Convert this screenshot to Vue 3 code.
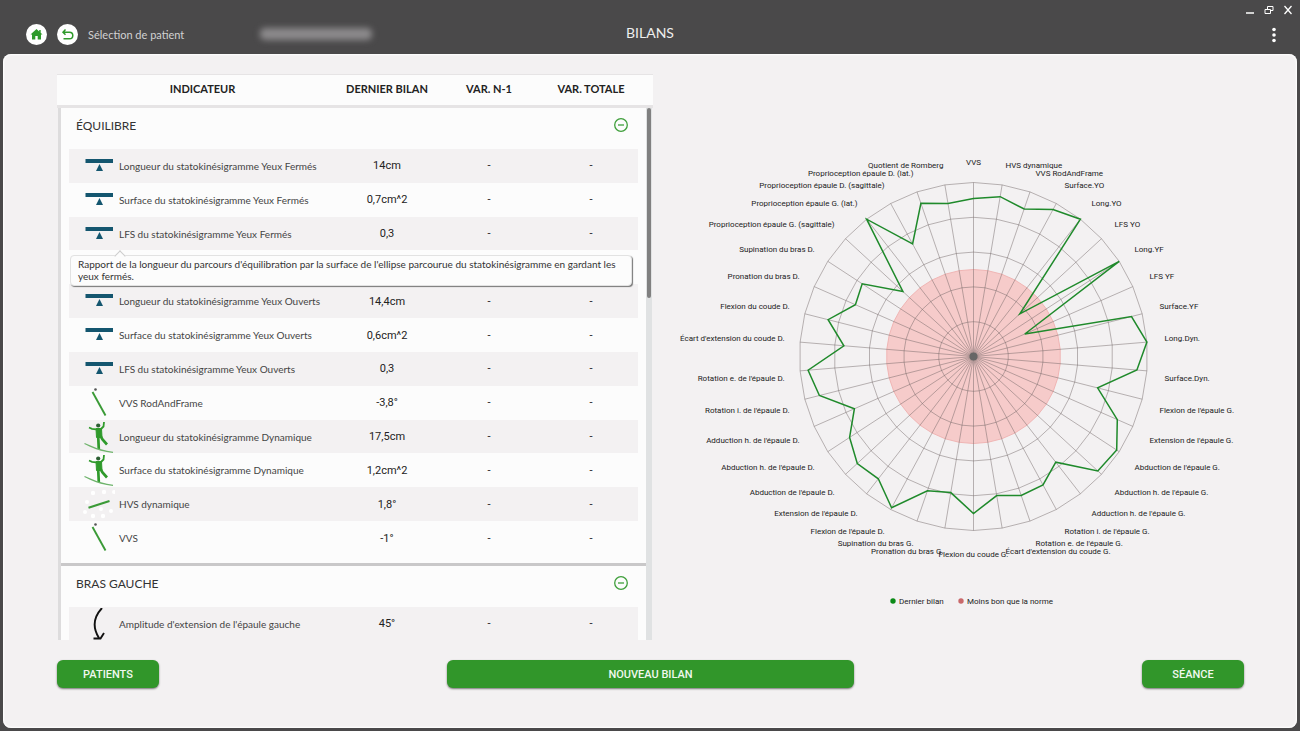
<script setup>
const sections = [
  {
    title: 'ÉQUILIBRE',
    rows: [
      { icon: 'balance', label: 'Longueur du statokinésigramme Yeux Fermés', value: '14cm' },
      { icon: 'balance', label: 'Surface du statokinésigramme Yeux Fermés', value: '0,7cm^2' },
      { icon: 'balance', label: 'LFS du statokinésigramme Yeux Fermés', value: '0,3' },
      { icon: '', label: '', value: '' },
      { icon: 'balance', label: 'Longueur du statokinésigramme Yeux Ouverts', value: '14,4cm' },
      { icon: 'balance', label: 'Surface du statokinésigramme Yeux Ouverts', value: '0,6cm^2' },
      { icon: 'balance', label: 'LFS du statokinésigramme Yeux Ouverts', value: '0,3' },
      { icon: 'rod', label: 'VVS RodAndFrame', value: '-3,8°' },
      { icon: 'surfer', label: 'Longueur du statokinésigramme Dynamique', value: '17,5cm' },
      { icon: 'surfer', label: 'Surface du statokinésigramme Dynamique', value: '1,2cm^2' },
      { icon: 'hrod', label: 'HVS dynamique', value: '1,8°' },
      { icon: 'rod', label: 'VVS', value: '-1°' },
    ],
    tip: "Rapport de la longueur du parcours d'équilibration par la surface de l'ellipse parcourue du statokinésigramme en gardant les yeux fermés.",
  },
  {
    title: 'BRAS GAUCHE',
    rows: [{ icon: 'arc', label: "Amplitude d'extension de l'épaule gauche", value: '45°' }],
  },
]

const axes = [
  ['VVS', 158], ['HVS dynamique', 162], ['VVS RodAndFrame', 156], ['Surface.YO', 167],
  ['Long.YO', 174], ['LFS YO', 63], ['Long.YF', 174], ['LFS YF', 56], ['Surface.YF', 163],
  ['Long.Dyn.', 174], ['Surface.Dyn.', 164], ["Flexion de l'épaule G.", 128],
  ["Extension de l'épaule G.", 157], ["Abduction de l'épaule G.", 171],
  ["Abduction h. de l'épaule G.", 169], ["Adduction h. de l'épaule G.", 134],
  ["Rotation i. de l'épaule G.", 146], ["Rotation e. de l'épaule G.", 147],
  ["Écart d'extension du coude G.", 141], ['Flexion du coude G.', 157],
  ['Pronation du bras G.', 138], ['Supination du bras G.', 142],
  ["Flexion de l'épaule D.", 172], ["Extension de l'épaule D.", 155],
  ["Abduction de l'épaule D.", 158], ["Abduction h. de l'épaule D.", 148],
  ["Adduction h. de l'épaule D.", 130], ["Rotation i. de l'épaule D.", 159],
  ["Rotation e. de l'épaule D.", 166], ["Écart d'extension du coude D.", 130],
  ['Flexion du coude D.', 150], ['Pronation du bras D.', 129], ['Supination du bras D.', 133],
  ['Proprioception épaule G. (sagittale)', 96], ['Proprioception épaule G. (lat.)', 174],
  ['Proprioception épaule D. (sagittale)', 128], ['Proprioception épaule D. (lat.)', 162],
  ['Quotient de Romberg', 155],
]
const n = axes.length
const radius = 174
const point = (i, r) => {
  const a = (2 * Math.PI * i) / n
  return [r * Math.sin(a), -r * Math.cos(a)]
}
const ring = (r) => axes.map((_, i) => point(i, r).map((v) => v.toFixed(1)).join(',')).join(' ')
const rings = [1, 2, 3, 4, 5].map((k) => ring((radius * k) / 5))
const norm = ring(radius / 2)
const series = axes.map(([, r], i) => point(i, r).map((v) => v.toFixed(1)).join(',')).join(' ')
const spokes = axes.map((_, i) => point(i, radius))
const labels = axes.map(([text], i) => {
  const a = (2 * Math.PI * i) / n
  const s = Math.sin(a)
  const c = Math.cos(a)
  const middle = i === 0 || i === n / 2
  return {
    text,
    x: Math.round(192 * s) + (!middle && s < 0 ? 2 : 0),
    y: Math.round(-196 * c - Math.sign(c) * 4 * s ** 4) + 4,
    anchor: middle ? 'middle' : s > 0 ? 'start' : 'end',
  }
})
</script>

<template>
  <div class="app">
    <header class="topbar">
      <div class="nav">
        <button class="round" aria-label="Accueil">
          <svg viewBox="0 0 21 21" width="21" height="21"><path d="M10.500 5 4.500 10.500H6V15.500H9.300V12H11.700V15.500H15V10.500H16.500L14.700 8.800V6H13.200V7.400Z" fill="#2e9a2b" /></svg>
        </button>
        <button class="round" aria-label="Retour">
          <svg viewBox="0 0 21 21" width="21" height="21" fill="none" stroke="#2f9a2b" stroke-width="1.500"><path d="M8.500 5.500 6 8.200 8.500 10.800M6 8.200H12.500A3.300 3.300 0 0 1 12.500 14.800H6.500" /></svg>
        </button>
        <span class="crumb">Sélection de patient</span>
        <span class="masked" aria-hidden="true"></span>
      </div>
      <h1>BILANS</h1>
      <div class="right">
        <div class="window">
          <button aria-label="Réduire"><svg viewBox="0 0 10 10" width="10" height="10"><path d="M1 8H9" stroke="#fff" stroke-width="1.500" /></svg></button>
          <button aria-label="Restaurer"><svg viewBox="0 0 10 10" width="10" height="10" fill="none" stroke="#fff"><path d="M1 4.500H6.500V8.500H1ZM3.500 4V1.500H9V5.500H7" /></svg></button>
          <button aria-label="Fermer"><svg viewBox="0 0 10 10" width="10" height="10"><path d="M1.500 1 8.500 9M8.500 1 1.500 9" stroke="#fff" stroke-width="1.300" /></svg></button>
        </div>
        <button class="more" aria-label="Menu"><svg viewBox="0 0 6 16" width="6" height="16" fill="#fff"><circle cx="3" cy="2.500" r="1.800" /><circle cx="3" cy="8" r="1.800" /><circle cx="3" cy="13.500" r="1.800" /></svg></button>
      </div>
    </header>

    <main class="panel">
      <div class="content">
        <section class="report">
          <table class="head">
            <thead>
              <tr><th>INDICATEUR</th><th class="num">DERNIER BILAN</th><th class="num">VAR. N-1</th><th class="num">VAR. TOTALE</th></tr>
            </thead>
          </table>
          <div class="scroller">
            <div class="cards">
              <section v-for="s in sections" :key="s.title" class="card">
                <div class="title">
                  <h2>{{ s.title }}</h2>
                  <button class="fold" aria-label="Replier">
                    <svg viewBox="0 0 14 14" width="14" height="14" fill="none" stroke="#3f9f3b"><circle cx="7" cy="7" r="6.300" stroke-width="1.300" /><path d="M4 7H10" stroke-width="1.300" /></svg>
                  </button>
                </div>
                <table :class="['rows', { full: s.rows.length > 1 }]">
                  <tbody>
                    <tr v-for="(r, i) in s.rows" :key="i">
                      <td class="icon">
                        <svg v-if="r.icon" viewBox="0 0 32 32" width="32" height="32">
                          <g v-if="r.icon === 'balance'" fill="#14566f"><rect x="2.500" y="9" width="27.500" height="4" /><path d="M16.500 14 20 21H13Z" /></g>
                          <g v-else-if="r.icon === 'rod'"><path d="M9.500 5 22.500 28.500" stroke="#3a9a36" stroke-width="1.900" /><circle cx="12.500" cy="2.500" r="1.300" fill="#555" /></g>
                          <g v-else-if="r.icon === 'hrod'">
                            <g fill="#fff"><circle cx="10" cy="5" r="2.200" /><circle cx="21" cy="4" r="2.200" /><circle cx="31" cy="4" r="2" /><circle cx="4" cy="14" r="2" /><circle cx="2" cy="24" r="2" /><circle cx="10" cy="28" r="2.200" /><circle cx="20" cy="28" r="2.200" /><circle cx="28" cy="23" r="2" /><circle cx="18" cy="21" r="2" /></g>
                            <path d="M5.500 19.800 26.500 13" stroke="#3a9a36" stroke-width="2.200" />
                          </g>
                          <g v-else-if="r.icon === 'surfer'" fill="none" stroke="#2f9a2b">
                            <path d="M6 6.500 9 7.800 13 8.300 18 8 20.500 5.500 21 1" stroke-width="1.800" />
                            <path d="M13 7.500H18.500L19 16.500H13.500Z" fill="#2f9a2b" stroke-width="1" />
                            <path d="M15.200 15.500 15.800 28M17.500 15 19.500 18.500 24 23.500" stroke-width="2.700" />
                            <circle cx="15.200" cy="4.500" r="2.100" fill="#2c5f33" stroke="none" />
                            <path d="M1.500 22.500C10 26 14 29.500 30 31.300" stroke-width="1.300" stroke="#6db36a" />
                          </g>
                          <g v-else fill="none" stroke="#111" stroke-width="1.900"><path d="M19 0Q6 14 16 30M10.500 30.500H17.500L21 25" /></g>
                        </svg>
                      </td>
                      <th scope="row">{{ r.label }}</th>
                      <td class="num">{{ r.value }}</td>
                      <td class="num">{{ r.label ? '-' : '' }}</td>
                      <td class="num last">{{ r.label ? '-' : '' }}</td>
                    </tr>
                  </tbody>
                </table>
                <div v-if="s.tip" class="tip" role="tooltip">{{ s.tip }}</div>
              </section>
            </div>
            <div class="track"><div class="thumb"></div></div>
          </div>
        </section>

        <section class="chart">
          <svg viewBox="0 0 591 565" role="img" aria-label="Bilan radar">
            <g transform="translate(320.500 282.500)">
              <polygon :points="norm" fill="#f6cbca" stroke="#f0b5b4" />
              <g fill="none" stroke="#6b6060" stroke-opacity="0.450" stroke-width="1">
                <polygon v-for="(p, i) in rings" :key="i" :points="p" />
                <line v-for="(p, i) in spokes" :key="i" x1="0" y1="0" :x2="p[0]" :y2="p[1]" />
              </g>
              <circle r="4" fill="#666" />
              <polygon :points="series" fill="none" stroke="#1f8a2b" stroke-width="1.500" />
              <text v-for="l in labels" :key="l.text" :x="l.x" :y="l.y" :text-anchor="l.anchor">{{ l.text }}</text>
            </g>
            <circle cx="240" cy="527" r="2.700" fill="#0b8a17" />
            <text x="246" y="530">Dernier bilan</text>
            <circle cx="308" cy="527" r="2.700" fill="#c9696b" />
            <text x="314" y="530">Moins bon que la norme</text>
          </svg>
        </section>
      </div>

      <footer class="actions">
        <button>PATIENTS</button>
        <button>NOUVEAU BILAN</button>
        <button>SÉANCE</button>
      </footer>
    </main>
  </div>
</template>

<style>
body {
  background: #4a494a;
}
</style>

<style scoped>
* {
  box-sizing: border-box;
}
.app {
  height: 100vh;
  display: flex;
  flex-direction: column;
  padding: 0 3px 3px;
  background: #4a494a;
  font-family: Lato, "Liberation Sans", sans-serif;
  color: #333;
}
button {
  font: inherit;
  border: 0;
  padding: 0;
  background: none;
  cursor: pointer;
}
svg {
  display: block;
}
.topbar {
  height: 54px;
  flex: none;
  display: grid;
  grid-template-columns: 1fr auto 1fr;
  color: #eee;
}
.nav {
  display: flex;
  align-items: center;
  gap: 10px;
  padding: 14px 0 0 23px;
}
.round {
  width: 21px;
  height: 21px;
  border-radius: 50%;
  background: #fff;
}
.crumb {
  font-size: 11px;
  color: #d2d2d2;
}
.masked {
  width: 112px;
  height: 12px;
  margin-left: 66px;
  border-radius: 5px;
  background: #8c8a8c;
  filter: blur(3px);
}
h1 {
  margin: 0;
  padding-top: 24px;
  font-size: 14px;
  line-height: 18px;
  font-weight: 400;
}
.right {
  display: flex;
  flex-direction: column;
  align-items: flex-end;
  padding: 5px 4px 0 0;
  gap: 12px;
}
.window {
  display: flex;
  gap: 9px;
}
.more {
  margin-right: 16px;
}
.panel {
  flex: 1;
  min-height: 0;
  display: flex;
  flex-direction: column;
  padding: 20px 53px 40px 54px;
  border-radius: 8px;
  background: #f3f1f2;
  box-shadow: inset 0 0 2px 1px #fff;
}
.content {
  flex: 1;
  min-height: 0;
  display: grid;
  grid-template-columns: 596fr 591fr;
  grid-template-rows: minmax(0, 1fr);
}
.report {
  display: flex;
  flex-direction: column;
  min-height: 0;
}
table {
  width: 100%;
  border-spacing: 0;
  table-layout: fixed;
}
th,
td {
  padding: 0;
}
.head {
  flex: none;
  height: 34px;
  padding: 0 11px 0 12px;
  background: #fcfcfc;
  border: solid #e6e4e5;
  border-width: 1px 0 3px;
  font-size: 11px;
  line-height: 12px;
  color: #222;
}
.head th {
  padding-bottom: 2px;
}
.num {
  width: 102px;
  text-align: center;
}
.scroller {
  flex: 1;
  min-height: 0;
  display: flex;
  overflow: hidden;
  padding: 0 1px;
}
.cards {
  flex: 1;
  border-left: 3px solid #dddcdd;
}
.card {
  position: relative;
  padding: 0 8px 8px;
  background: #fcfcfc;
  border-bottom: 3px solid #c9c8c9;
}
.card + .card {
  border-bottom: 0;
}
.title {
  height: 41px;
  display: flex;
  justify-content: space-between;
  align-items: flex-start;
  padding: 10px 10px 0 7px;
}
h2 {
  margin: 0;
  font-size: 12px;
  line-height: 15px;
  font-weight: 400;
}
.rows.full {
  height: 406px;
}
.rows tr {
  height: 33px;
}
.rows tr:nth-child(odd) {
  background: #f3f1f2;
}
.rows th {
  font-size: 10px;
  font-weight: 400;
  text-align: left;
  color: #444;
}
.rows .num {
  font: 11px Roboto, "Liberation Sans", sans-serif;
  color: #222;
}
.rows .last {
  width: 98px;
  padding-left: 4px;
}
.icon {
  width: 50px;
}
.icon svg {
  margin: 0 0 0 14px;
}
.tip {
  position: absolute;
  top: 147px;
  left: 9px;
  right: 14px;
  padding: 2px 7px 3px;
  border-radius: 4px;
  background: #fcfcfc;
  border: 1px solid #e2e2e2;
  box-shadow: 1px 1px 1px #777;
  font-size: 10px;
  line-height: 12px;
}
.tip::before {
  content: "";
  position: absolute;
  top: -4px;
  left: 45px;
  width: 7px;
  height: 7px;
  background: #fcfcfc;
  border: solid #ccc;
  border-width: 1px 1px 0 0;
  transform: rotate(-45deg);
}
.track {
  width: 6px;
  background: #e0e2e3;
}
.thumb {
  width: 4px;
  height: 190px;
  margin-left: 1px;
  border-radius: 2px;
  background: #808080;
}
.chart {
  min-width: 0;
}
.chart svg {
  width: 100%;
  max-height: 100%;
}
.chart text {
  font: 8px Roboto, "Liberation Sans", sans-serif;
  fill: #222;
}
.actions {
  flex: none;
  display: grid;
  grid-template-columns: 102px minmax(0, 407px) 102px;
  justify-content: space-between;
  padding-top: 20px;
}
.actions button {
  height: 28px;
  border-radius: 6px;
  background: #31962a;
  box-shadow: 0 1px 2px #777;
  color: #f0f8ef;
  font: 500 11px Roboto, "Liberation Sans", sans-serif;
}
</style>
